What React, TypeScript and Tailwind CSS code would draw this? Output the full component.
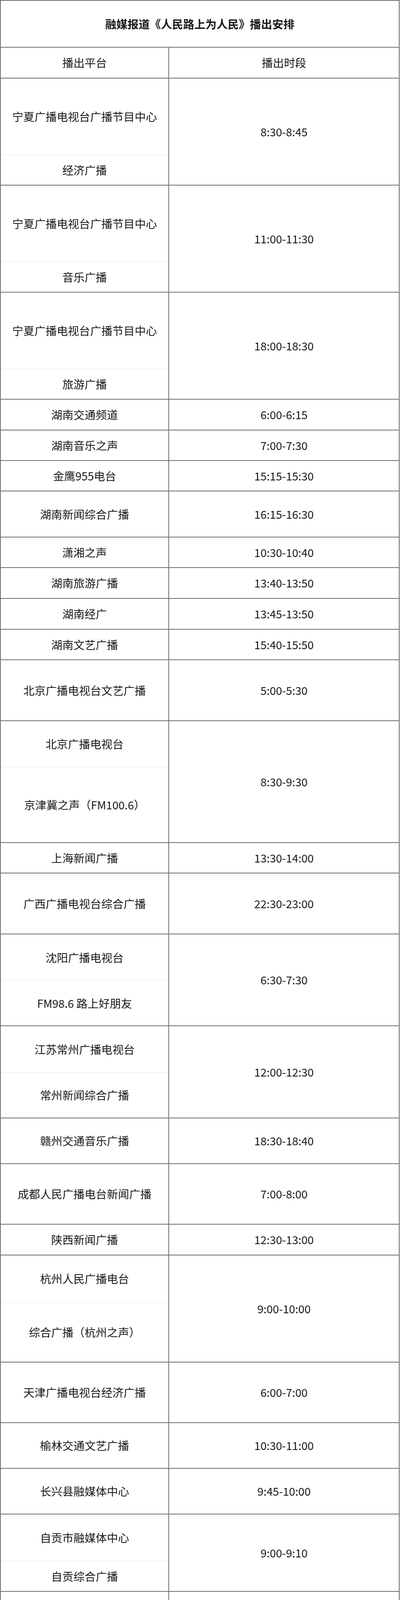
import React from 'react';

type Row = {
  subs: { name: string; h: string }[];
  time: string;
};

// heights are content heights; the 2px bottom border of each row sits below the last sub-row
const rows: Row[] = [
  { subs: [{ name: '宁夏广播电视台广播节目中心', h: 'h-[196px]' }, { name: '经济广播', h: 'h-[76px]' }], time: '8:30-8:45' },
  { subs: [{ name: '宁夏广播电视台广播节目中心', h: 'h-[196px]' }, { name: '音乐广播', h: 'h-[76px]' }], time: '11:00-11:30' },
  { subs: [{ name: '宁夏广播电视台广播节目中心', h: 'h-[196px]' }, { name: '旅游广播', h: 'h-[76px]' }], time: '18:00-18:30' },
  { subs: [{ name: '湖南交通频道', h: 'h-[77px]' }], time: '6:00-6:15' },
  { subs: [{ name: '湖南音乐之声', h: 'h-[76px]' }], time: '7:00-7:30' },
  { subs: [{ name: '金鹰955电台', h: 'h-[76px]' }], time: '15:15-15:30' },
  { subs: [{ name: '湖南新闻综合广播', h: 'h-[116px]' }], time: '16:15-16:30' },
  { subs: [{ name: '潇湘之声', h: 'h-[76px]' }], time: '10:30-10:40' },
  { subs: [{ name: '湖南旅游广播', h: 'h-[77px]' }], time: '13:40-13:50' },
  { subs: [{ name: '湖南经广', h: 'h-[77px]' }], time: '13:45-13:50' },
  { subs: [{ name: '湖南文艺广播', h: 'h-[76px]' }], time: '15:40-15:50' },
  { subs: [{ name: '北京广播电视台文艺广播', h: 'h-[154px]' }], time: '5:00-5:30' },
  { subs: [{ name: '北京广播电视台', h: 'h-[118px]' }, { name: '京津冀之声（FM100.6）', h: 'h-[192px]' }], time: '8:30-9:30' },
  { subs: [{ name: '上海新闻广播', h: 'h-[76px]' }], time: '13:30-14:00' },
  { subs: [{ name: '广西广播电视台综合广播', h: 'h-[154px]' }], time: '22:30-23:00' },
  { subs: [{ name: '沈阳广播电视台', h: 'h-[119px]' }, { name: 'FM98.6 路上好朋友', h: 'h-[114px]' }], time: '6:30-7:30' },
  { subs: [{ name: '江苏常州广播电视台', h: 'h-[119px]' }, { name: '常州新闻综合广播', h: 'h-[115px]' }], time: '12:00-12:30' },
  { subs: [{ name: '赣州交通音乐广播', h: 'h-[115px]' }], time: '18:30-18:40' },
  { subs: [{ name: '成都人民广播电台新闻广播', h: 'h-[153px]' }], time: '7:00-8:00' },
  { subs: [{ name: '陕西新闻广播', h: 'h-[77px]' }], time: '12:30-13:00' },
  { subs: [{ name: '杭州人民广播电台', h: 'h-[120px]' }, { name: '综合广播（杭州之声）', h: 'h-[152px]' }], time: '9:00-10:00' },
  { subs: [{ name: '天津广播电视台经济广播', h: 'h-[153px]' }], time: '6:00-7:00' },
  { subs: [{ name: '榆林交通文艺广播', h: 'h-[115px]' }], time: '10:30-11:00' },
  { subs: [{ name: '长兴县融媒体中心', h: 'h-[115px]' }], time: '9:45-10:00' },
  { subs: [{ name: '自贡市融媒体中心', h: 'h-[120px]' }, { name: '自贡综合广播', h: 'h-[76px]' }], time: '9:00-9:10' },
  { subs: [{ name: '宁波交通广播', h: 'h-[76px]' }], time: '5:30-6:00' },
  { subs: [{ name: '贵州广播电视台综合广播', h: 'h-[153px]' }], time: '7:35-8:00' },
  { subs: [{ name: '金华市新闻传媒中心', h: 'h-[115px]' }], time: '8:30-9:00' },
  { subs: [{ name: '湖州市新闻传媒中心', h: 'h-[116px]' }], time: '12:30-13:00' },
  { subs: [{ name: '温州交通广播', h: 'h-[76px]' }], time: '10:15-10:30' },
  { subs: [{ name: '贵州广播电视台', h: 'h-[120px]' }, { name: '交通广播、音乐广播', h: 'h-[113px]' }], time: '10:15-10:30' },
  { subs: [{ name: '甘肃都市调频广播', h: 'h-[116px]' }], time: '8:50-9:00' },
  { subs: [{ name: '吉安综合广播', h: 'h-[76px]' }], time: '19:30-20:00' },
  { subs: [{ name: '福州广播电视台新闻广播', h: 'h-[154px]' }], time: '12:00-12:30' },
  { subs: [{ name: '福建交通广播', h: 'h-[77px]' }], time: '6:00-07:00' },
  { subs: [{ name: '常州新闻广播', h: 'h-[76px]' }], time: '12:00-12:30' },
  { subs: [{ name: '内蒙古新闻广播', h: 'h-[115px]' }], time: '10:00-10:30' },
  { subs: [{ name: '广州交通电台', h: 'h-[76px]' }], time: '19:00-19:15' },
  { subs: [{ name: '辽宁经济广播', h: 'h-[77px]' }], time: '8:40-8:50' },
  { subs: [{ name: '黑龙江新闻广播', h: 'h-[115px]' }], time: '15:00-15:10' },
  { subs: [{ name: '山东经济广播', h: 'h-[76px]' }], time: '17:50-18:00' },
  { subs: [{ name: '青岛新闻综合广播', h: 'h-[116px]' }], time: '17:50-18:00' },
  { subs: [{ name: '淄博综合广播', h: 'h-[75px]' }], time: '8:30-8:40' },
  { subs: [{ name: '淄博经济广播', h: 'h-[77px]' }], time: '9:10-9:20' },
  { subs: [{ name: '淄博交通音乐广播', h: 'h-[115px]' }], time: '18:00-18:10' },
  { subs: [{ name: '宜昌三峡融媒体中心', h: 'h-[120px]' }, { name: '宜昌新闻综合广播', h: 'h-[115px]' }], time: '9:30-9:40' },
  { subs: [{ name: '襄阳融媒体中心襄阳之声', h: 'h-[152px]' }], time: '8:50-9:00' },
  { subs: [{ name: '德州交通音乐广播', h: 'h-[115px]' }], time: '8:30-8:40' },
  { subs: [{ name: '楚天音乐广播', h: 'h-[77px]' }], time: '8:50-9:00' },
  { subs: [{ name: '湖北经典音乐广播', h: 'h-[114px]' }], time: '7:50-8:00' },
  { subs: [{ name: '大连新闻综合广播', h: 'h-[116px]' }], time: '17:50-18:00' },
  { subs: [{ name: '大连交通广播', h: 'h-[77px]' }], time: '16:00-16:10' },
  { subs: [{ name: '大连都市之声广播', h: 'h-[114px]' }], time: '11:50-12:00' },
];

function ScheduleRow({ row }: { row: Row }) {
  return (
    <div className="flex border-b-2 border-[#6e6e6e]">
      <div className="flex w-[429px] flex-col">
        {row.subs.map((sub, i) => (
          <div
            key={i}
            className={`flex items-center justify-center ${sub.h} ${
              i < row.subs.length - 1 ? 'border-b border-[#e9e9e9]' : ''
            }`}
          >
            {sub.name}
          </div>
        ))}
      </div>
      <div className="flex flex-1 items-center justify-center border-l-2 border-[#6e6e6e]">
        {row.time}
      </div>
    </div>
  );
}

export default function App() {
  return (
    <div className="bg-white font-['Noto_Sans_CJK_SC','Microsoft_YaHei',sans-serif] text-[28.5px] leading-none text-[#1a1a1a]">
      <div className="w-[1023px] border-x-2 border-[#6e6e6e]">
        <div className="flex h-[122px] items-center justify-center border-y-2 border-[#6e6e6e] font-bold">
          融媒报道《人民路上为人民》播出安排
        </div>
        <div className="flex border-b-2 border-[#6e6e6e]">
          <div className="flex h-[77px] w-[429px] items-center justify-center">播出平台</div>
          <div className="flex flex-1 items-center justify-center border-l-2 border-[#6e6e6e]">
            播出时段
          </div>
        </div>
        {rows.map((row, i) => (
          <ScheduleRow key={i} row={row} />
        ))}
      </div>
    </div>
  );
}
